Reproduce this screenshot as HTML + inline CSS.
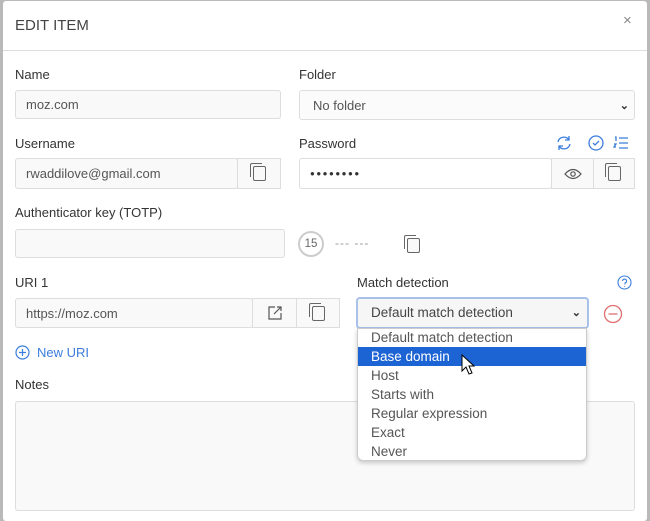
<!DOCTYPE html>
<html><head><style>
*{box-sizing:border-box;margin:0;padding:0}
body{width:650px;height:499px;background:#b9b9b9;font-family:"Liberation Sans",sans-serif;position:relative;overflow:hidden;color:#333}
.dlg{position:absolute;left:3px;top:1px;width:644px;height:520px;background:#fff;border-radius:3px}
.a{position:absolute}
.lbl{position:absolute;font-size:13px;color:#333}
.in{position:absolute;background:#f9f9f9;border:1px solid #ddd;border-radius:3px;font-size:13px;color:#555;padding-left:10px;display:flex;align-items:center}
.btn{position:absolute;border:1px solid #ddd;background:#f9f9f9;display:flex;align-items:center;justify-content:center}
.cp{width:13px;height:15px;border:1.3px solid #666;border-radius:2px;position:relative;background:#f9f9f9}
.cp:before{content:"";position:absolute;left:-4px;top:-4px;width:11px;height:13px;border-left:1.3px solid #666;border-top:1.3px solid #666;border-radius:2px 0 0 0}
.opt{height:19px;line-height:19px;padding-left:13px;font-size:13.5px;color:#555}
</style></head><body>
<div class="dlg">
<div class="a" style="left:12px;top:16px;font-size:15px;color:#444">EDIT ITEM</div>
<div class="a" style="left:620px;top:11px;font-size:15px;color:#888">×</div>
<div class="a" style="left:0;top:49px;width:644px;height:1px;background:#ddd"></div>
</div>
<div class="lbl" style="left:15px;top:67px">Name</div>
<div class="lbl" style="left:299px;top:67px">Folder</div>
<div class="in" style="left:15px;top:90px;width:266px;height:29px">moz.com</div>
<div class="in" style="left:299px;top:90px;width:336px;height:30px;background:#fbfbfb;padding-left:13px">No folder<span style="position:absolute;right:5px;font-size:11px;font-weight:bold;color:#333">⌄</span></div>
<div class="lbl" style="left:15px;top:136px">Username</div>
<div class="lbl" style="left:299px;top:136px">Password</div>
<svg class="a" style="left:555px;top:134px" width="80" height="18" fill="none" stroke="#3b7ddd" stroke-width="1.3">
<path d="M3 8a6 6 0 0 1 11-2M15 10a6 6 0 0 1-11 2M14 2v4h-4M4 16v-4h4"/>
<circle cx="41" cy="9" r="7"/><path d="M38 9l2 2 4-4"/>
<path d="M60 3h1v4M59 10h2l-2 3h2M64 4h9M64 9h9M64 14h9"/></svg>
<div class="in" style="left:15px;top:158px;width:223px;height:31px">rwaddilove@gmail.com</div>
<div class="btn" style="left:237px;top:158px;width:44px;height:31px"><div class="cp"></div></div>
<div class="in" style="left:299px;top:158px;width:253px;height:31px;background:#fff;letter-spacing:1.5px;font-size:8px;color:#333">●●●●●●●●</div>
<div class="btn" style="left:551px;top:158px;width:43px;height:31px"><svg width="18" height="12" fill="none" stroke="#555" stroke-width="1.2"><path d="M1 6q8-9 16 0q-8 9-16 0z"/><circle cx="9" cy="6" r="2.2"/></svg></div>
<div class="btn" style="left:593px;top:158px;width:42px;height:31px"><div class="cp"></div></div>
<div class="lbl" style="left:15px;top:205px">Authenticator key (TOTP)</div>
<div class="in" style="left:15px;top:229px;width:270px;height:29px"></div>
<div class="a" style="left:298px;top:231px;width:26px;height:26px;border-radius:50%;border:2px solid #ccc;font-size:11.5px;color:#666;text-align:center;line-height:22px">15</div>
<div class="a" style="left:335px;top:236px;font-size:12px;color:#999;letter-spacing:1px">--- ---</div>
<div class="a" style="left:407px;top:238px"><div class="cp"></div></div>
<div class="lbl" style="left:15px;top:275px">URI 1</div>
<div class="lbl" style="left:357px;top:275px">Match detection</div>
<svg class="a" style="left:617px;top:275px" width="15" height="15" fill="none" stroke="#3b7ddd" stroke-width="1.1"><circle cx="7.5" cy="7.5" r="6.5"/><path d="M5.5 6a2 2 0 1 1 2.5 2v1.5M7.5 11v.8"/></svg>
<div class="in" style="left:15px;top:298px;width:238px;height:30px">https://moz.com</div>
<div class="btn" style="left:252px;top:298px;width:45px;height:30px"><svg width="16" height="16" fill="none" stroke="#555" stroke-width="1.2"><path d="M8 2H2v12h12V8M10 2h4v4M14 2L7 9"/></svg></div>
<div class="btn" style="left:296px;top:298px;width:44px;height:30px"><div class="cp"></div></div>
<div class="a" style="left:356px;top:297px;width:233px;height:32px;border:2px solid #a8c1ea;border-radius:4px;background:#f6f6f6;font-size:13.5px;color:#444;padding-left:13px;line-height:28px">Default match detection<span style="position:absolute;right:6px;font-size:11px;font-weight:bold;color:#333">⌄</span></div>
<svg class="a" style="left:603px;top:304px" width="20" height="20" fill="none" stroke="#e07070" stroke-width="1.3"><circle cx="10" cy="10" r="8.5"/><path d="M5.5 10h9"/></svg>
<svg class="a" style="left:15px;top:345px" width="15" height="15" fill="none" stroke="#3b7ddd" stroke-width="1.2"><circle cx="7.5" cy="7.5" r="6.5"/><path d="M7.5 4v7M4 7.5h7"/></svg>
<div class="a" style="left:37px;top:345px;font-size:13px;color:#3b7ddd">New URI</div>
<div class="lbl" style="left:15px;top:377px">Notes</div>
<div class="in" style="left:15px;top:401px;width:620px;height:110px"></div>
<div class="a" style="left:357px;top:328px;width:230px;height:133px;background:#fff;border:1px solid #ccc;border-radius:0 0 6px 6px;box-shadow:0 2px 5px rgba(0,0,0,.2);overflow:hidden">
<div class="opt" style="height:18px;line-height:18px">Default match detection</div>
<div class="opt" style="background:#1c63d3;color:#fff">Base domain</div>
<div class="opt">Host</div>
<div class="opt">Starts with</div>
<div class="opt">Regular expression</div>
<div class="opt">Exact</div>
<div class="opt">Never</div>
</div>
<svg class="a" style="left:461px;top:354px" width="14" height="22"><path d="M1 1v16l4-4 3 7 3-1-3-7h5z" fill="#fff" stroke="#000" stroke-width="1"/></svg>
</body></html>
